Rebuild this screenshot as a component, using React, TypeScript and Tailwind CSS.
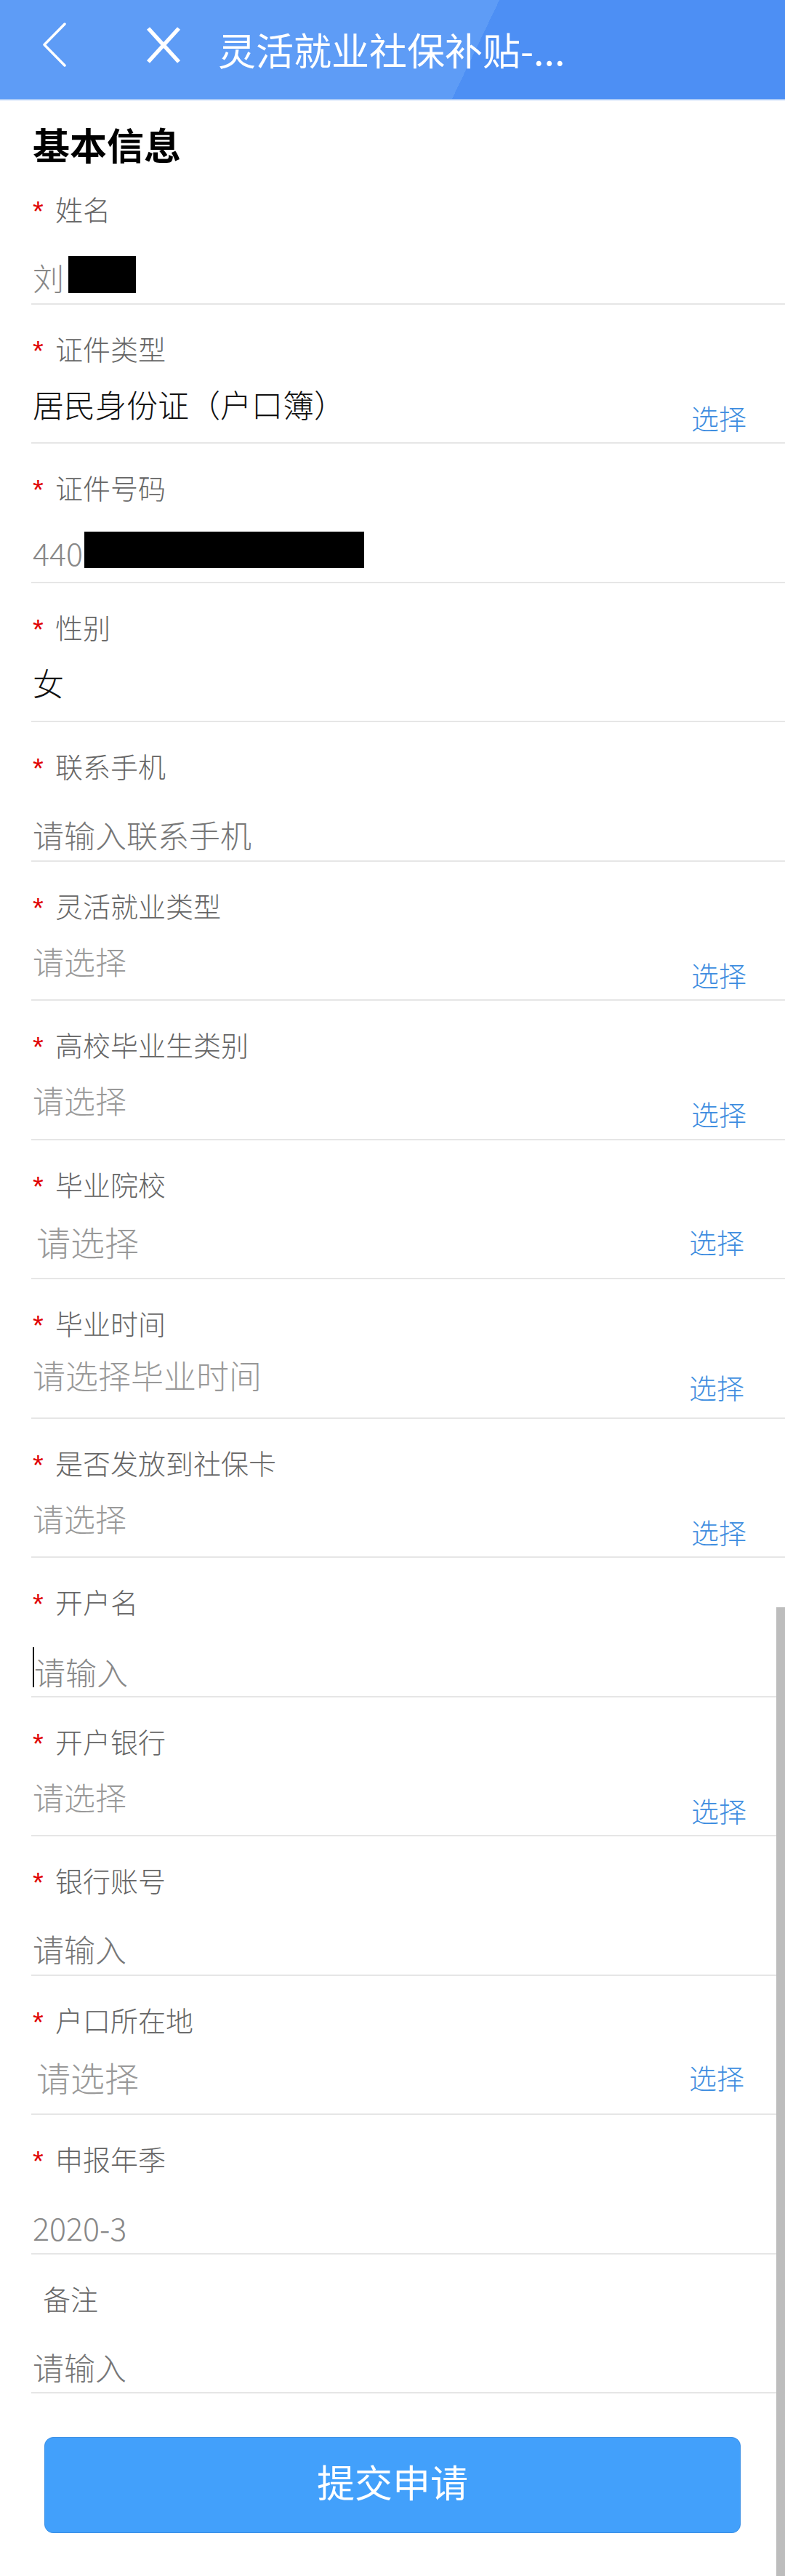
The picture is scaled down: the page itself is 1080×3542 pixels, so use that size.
import React from "react";

type Kind = "input" | "select" | "school" | "time" | "static";

type Row = {
  label: string;
  required: boolean;
  kind: Kind;
  value: React.ReactNode;
  tone: string;
};

const rows: Row[] = [
  {
    label: "姓名",
    required: true,
    kind: "input",
    tone: "text-[#888]",
    value: (
      <div className="mt-[46px] flex items-end">
        <span className="leading-[43px]">刘</span>
        <span className="ml-[6px] block h-[51px] w-[93px] bg-black" />
      </div>
    ),
  },
  { label: "证件类型", required: true, kind: "select", tone: "text-[#111]", value: "居民身份证（户口簿）" },
  {
    label: "证件号码",
    required: true,
    kind: "input",
    tone: "text-[#888]",
    value: (
      <div className="mt-[42px] flex items-end">
        <span className="leading-[43px]">440</span>
        <span className="ml-[2px] block h-[50px] w-[385px] bg-black" />
      </div>
    ),
  },
  { label: "性别", required: true, kind: "static", tone: "text-[#111]", value: "女" },
  { label: "联系手机", required: true, kind: "input", tone: "text-[#777]", value: "请输入联系手机" },
  { label: "灵活就业类型", required: true, kind: "select", tone: "text-[#999]", value: "请选择" },
  { label: "高校毕业生类别", required: true, kind: "select", tone: "text-[#999]", value: "请选择" },
  { label: "毕业院校", required: true, kind: "school", tone: "text-[#999]", value: "请选择" },
  { label: "毕业时间", required: true, kind: "time", tone: "text-[#999]", value: "请选择毕业时间" },
  { label: "是否发放到社保卡", required: true, kind: "select", tone: "text-[#999]", value: "请选择" },
  {
    label: "开户名",
    required: true,
    kind: "input",
    tone: "text-[#888]",
    value: (
      <div className="mt-[44px] flex items-end">
        <span className="block h-[55px] w-[2px] bg-black" />
        <span className="leading-[43px]">请输入</span>
      </div>
    ),
  },
  { label: "开户银行", required: true, kind: "select", tone: "text-[#999]", value: "请选择" },
  { label: "银行账号", required: true, kind: "input", tone: "text-[#777]", value: "请输入" },
  { label: "户口所在地", required: true, kind: "school", tone: "text-[#999]", value: "请选择" },
  { label: "申报年季", required: true, kind: "input", tone: "text-[#888]", value: "2020-3" },
  { label: "备注", required: false, kind: "input", tone: "text-[#777]", value: "请输入" },
];

function Value({ row }: { row: Row }) {
  if (typeof row.value !== "string") {
    return <div className={`text-[43px] ${row.tone}`}>{row.value}</div>;
  }
  if (row.kind === "input") {
    return <div className={`mt-[54px] text-[43px] leading-[43px] ${row.tone}`}>{row.value}</div>;
  }
  if (row.kind === "static") {
    return <div className={`mt-[36px] text-[43px] leading-[43px] ${row.tone}`}>{row.value}</div>;
  }
  if (row.kind === "school") {
    return (
      <div className="flex items-start justify-between pr-[56px]">
        <span className={`mt-[36px] pl-[5px] text-[47px] leading-[47px] ${row.tone}`}>{row.value}</span>
        <span className="mt-[41px] text-[38px] leading-[38px] text-[#3e8ee0]">选择</span>
      </div>
    );
  }
  if (row.kind === "time") {
    return (
      <div className="flex items-start justify-between pr-[56px]">
        <span className={`mt-[30px] text-[45px] leading-[45px] ${row.tone}`}>{row.value}</span>
        <span className="mt-[50px] text-[38px] leading-[38px] text-[#3e8ee0]">选择</span>
      </div>
    );
  }
  return (
    <div className="flex items-start justify-between pr-[53px]">
      <span className={`mt-[36px] text-[43px] leading-[43px] ${row.tone}`}>{row.value}</span>
      <span className="mt-[57px] text-[38px] leading-[38px] text-[#3e8ee0]">选择</span>
    </div>
  );
}

function Field({ row }: { row: Row }) {
  return (
    <div className="h-[191.5px] ml-[43px] pl-[2px] pt-[41px] border-b-2 border-[#e6e6e6] font-light">
      <div className="flex h-[38px] items-start text-[38px] leading-[38px] text-[#666]">
        {row.required ? (
          <span className="w-[31px] translate-y-[4px] font-['Liberation_Sans',sans-serif] font-normal text-[#e00000]">*</span>
        ) : (
          <span className="w-[14px]" />
        )}
        <span>{row.label}</span>
      </div>
      <Value row={row} />
    </div>
  );
}

export default function App() {
  return (
    <div className="relative min-h-[3542px] bg-white font-['Noto_Sans_CJK_SC','Noto_Sans',sans-serif]">
      {/* 顶部导航 */}
      <header className="flex h-[138px] items-center border-b-2 border-[#a9c9f7] bg-[linear-gradient(115.6deg,#5e9cf6_0%,#5e9cf6_60%,#4d8ff4_60%,#4d8ff4_100%)] pl-[58px] text-white">
        <svg width="33" height="61" viewBox="0 0 33 61" className="mb-[13px] shrink-0">
          <polyline points="31,2 3,30.5 31,59" fill="none" stroke="white" strokeWidth="3.5" strokeLinecap="round" strokeLinejoin="round" />
        </svg>
        <svg width="48" height="52" viewBox="0 0 48 52" className="mb-[12px] ml-[110px] shrink-0">
          <line x1="3" y1="3" x2="45" y2="49" stroke="white" strokeWidth="5.5" />
          <line x1="45" y1="3" x2="3" y2="49" stroke="white" strokeWidth="5.5" />
        </svg>
        <h1 className="ml-[51px] text-[52px] font-normal leading-[52px]">灵活就业社保补贴-...</h1>
      </header>

      <h2 className="h-[89px] pl-[45px] pt-[35px] text-[51px] font-bold leading-[51px] text-black">基本信息</h2>

      <div>
        {rows.map((row) => (
          <Field key={row.label} row={row} />
        ))}
      </div>

      <div className="pt-[60px] pb-[60px] pl-[61px]">
        <button className="flex h-[132px] w-[958px] items-center justify-center rounded-[12px] border border-[#3a8fe6] bg-[#42a0fb] pb-[10px] text-[52px] font-normal leading-[52px] text-white">
          提交申请
        </button>
      </div>

      {/* 滚动条 */}
      <div className="absolute right-0 top-[2210px] h-[1332px] w-[12px] bg-[#bdbdbd]" />
    </div>
  );
}
